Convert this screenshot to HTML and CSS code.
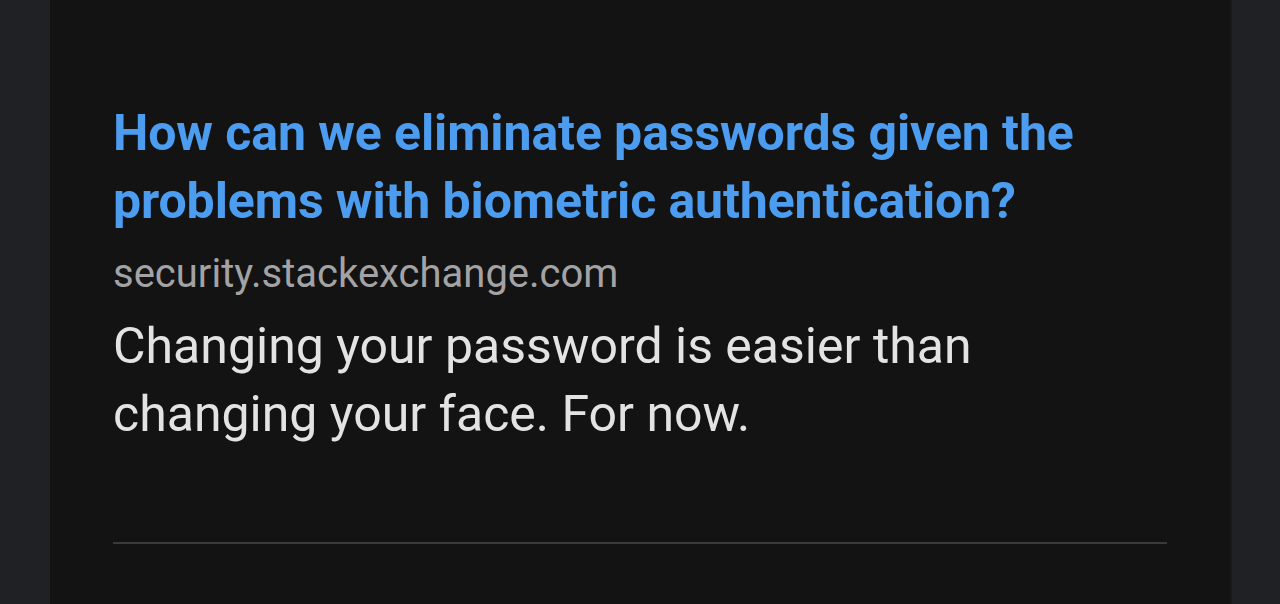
FILE: index.html
```html
<!DOCTYPE html>
<html>
<head>
<meta charset="utf-8">
<link rel="stylesheet" href="styles.css">
</head>
<body>
<div class="page">
  <main class="panel">
    <article class="result">
      <a class="title" href="#">How can we eliminate passwords given the problems with biometric authentication?</a>
      <div class="domain">security.stackexchange.com</div>
      <p class="desc">Changing your password is easier than changing your face. For now.</p>
    </article>
    <hr class="divider">
  </main>
</div>
</body>
</html>
```
FILE: styles.css
```css
html, body {
  margin: 0;
  padding: 0;
  height: 100%;
  background: #202124;
  overflow: hidden;
}
.page {
  display: flex;
  height: 604px;
  padding: 0 48px 0 50px;
}
.panel {
  flex: 1;
  background: #131313;
  padding: 99px 63px 0 63px;
  font-family: Roboto, "Noto Sans", sans-serif;
  border-right: 2px solid #19191a;
}
.result {
  display: flex;
  flex-direction: column;
  max-width: 1000px;
}
.title {
  color: #4c9cf0;
  font-weight: 700;
  font-size: 50px;
  line-height: 68px;
  letter-spacing: -0.1px;
  text-decoration: none;
}
.domain {
  color: #a3a3a5;
  font-size: 40px;
  line-height: 50px;
  margin-top: 14px;
}
.desc {
  color: #e3e3e3;
  font-size: 50px;
  line-height: 68px;
  margin: 13px 0 0 0;
}
.divider {
  border: none;
  height: 2px;
  background: #3b3b3b;
  margin: 94px 0 0 0;
}
```
